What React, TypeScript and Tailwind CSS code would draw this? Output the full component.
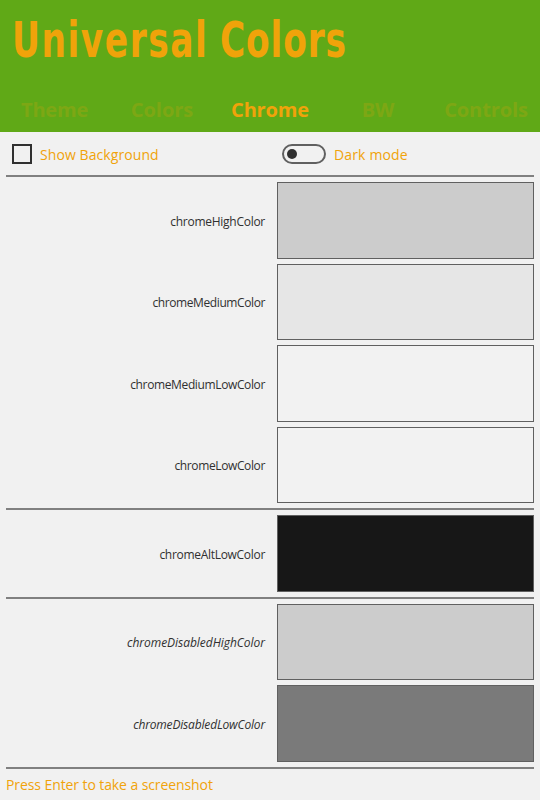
const tabs = [
  { name: 'Theme', spacing: 'tracking-[-0.2px] pl-px' },
  { name: 'Colors', spacing: 'tracking-normal' },
  { name: 'Chrome', spacing: 'tracking-[-0.15px]' },
  { name: 'BW', spacing: 'tracking-[-0.1px]' },
  { name: 'Controls', spacing: 'tracking-[-0.1px]' },
];

function Swatch({ name, height, fill, text }: { name: string; height: string; fill: string; text: string }) {
  return (
    <div className={`flex items-center ${height}`}>
      <div className={`w-[259px] shrink-0 pt-0.5 text-right text-[12px] leading-4 text-[#303030] ${text}`}>{name}</div>
      <div className={`ml-3 h-full w-[257px] border border-[#606060] ${fill}`} />
    </div>
  );
}

function Rule() {
  return <div className="h-0.5 shrink-0 bg-[#808080]" />;
}

export default function App() {
  return (
    <div className="flex h-[800px] w-[540px] flex-col overflow-hidden bg-[#f1f1f1] font-['Open_Sans','Noto_Sans',sans-serif]">
      <header className="flex h-[132px] shrink-0 flex-col justify-between bg-[#60a917] text-[#f0a30a]">
        <h1 className="flex h-[80px] pt-3 pl-3 font-['DejaVu_Sans_Condensed','DejaVu_Sans',sans-serif] text-[49px] leading-[58px] font-bold whitespace-nowrap">
          <span className="w-[208px] origin-left scale-x-[0.78] tracking-[2px]">Universal</span>
          <span className="origin-left scale-x-[0.78] tracking-[1.1px]">Colors</span>
        </h1>
        <nav className="flex h-[44px] items-center text-[20px] leading-7 font-bold">
          {tabs.map((t) => (
            <div key={t.name} className={`flex w-[108px] shrink-0 justify-center ${t.spacing} ${t.name === 'Chrome' ? '' : 'opacity-20'}`}>
              {t.name}
            </div>
          ))}
        </nav>
      </header>
      <main className="flex flex-1 flex-col px-1.5">
        <div className="flex h-[43px] items-center text-[14px] leading-5 text-[#f0a30a]">
          <label className="flex w-[270px] items-center gap-2 pl-1.5">
            <span className="size-5 border-2 border-[#303030]" />
            <span className="pt-0.5 tracking-[0.08px]">Show Background</span>
          </label>
          <label className="flex items-center gap-2 pl-1.5">
            <span className="flex h-5 w-11 items-center rounded-full border-2 border-[#606060] pl-[3px]">
              <span className="size-2.5 rounded-full bg-[#303030]" />
            </span>
            <span className="pt-0.5 tracking-[0.15px]">Dark mode</span>
          </label>
        </div>
        <Rule />
        <section className="flex flex-col gap-[5px] py-[5px]">
          <Swatch name="chromeHighColor" height="h-[77px]" fill="bg-[#cccccc]" text="tracking-[-0.27px]" />
          <Swatch name="chromeMediumColor" height="h-[76px]" fill="bg-[#e6e6e6]" text="tracking-[-0.4px]" />
          <Swatch name="chromeMediumLowColor" height="h-[77px]" fill="bg-[#f2f2f2]" text="tracking-[-0.37px]" />
          <Swatch name="chromeLowColor" height="h-[76px]" fill="bg-[#f2f2f2]" text="tracking-[-0.37px]" />
        </section>
        <Rule />
        <section className="py-[5px]">
          <Swatch name="chromeAltLowColor" height="h-[77px]" fill="bg-[#171717]" text="tracking-[-0.3px]" />
        </section>
        <Rule />
        <section className="flex flex-col gap-[5px] py-[5px]">
          <Swatch name="chromeDisabledHighColor" height="h-[76px]" fill="bg-[#cccccc]" text="italic tracking-[-0.04px]" />
          <Swatch name="chromeDisabledLowColor" height="h-[77px]" fill="bg-[#7a7a7a]" text="italic tracking-[-0.17px]" />
        </section>
        <Rule />
        <footer className="flex flex-1 items-center text-[14px] leading-5 tracking-[-0.09px] text-[#f0a30a]">Press Enter to take a screenshot</footer>
      </main>
    </div>
  );
}
